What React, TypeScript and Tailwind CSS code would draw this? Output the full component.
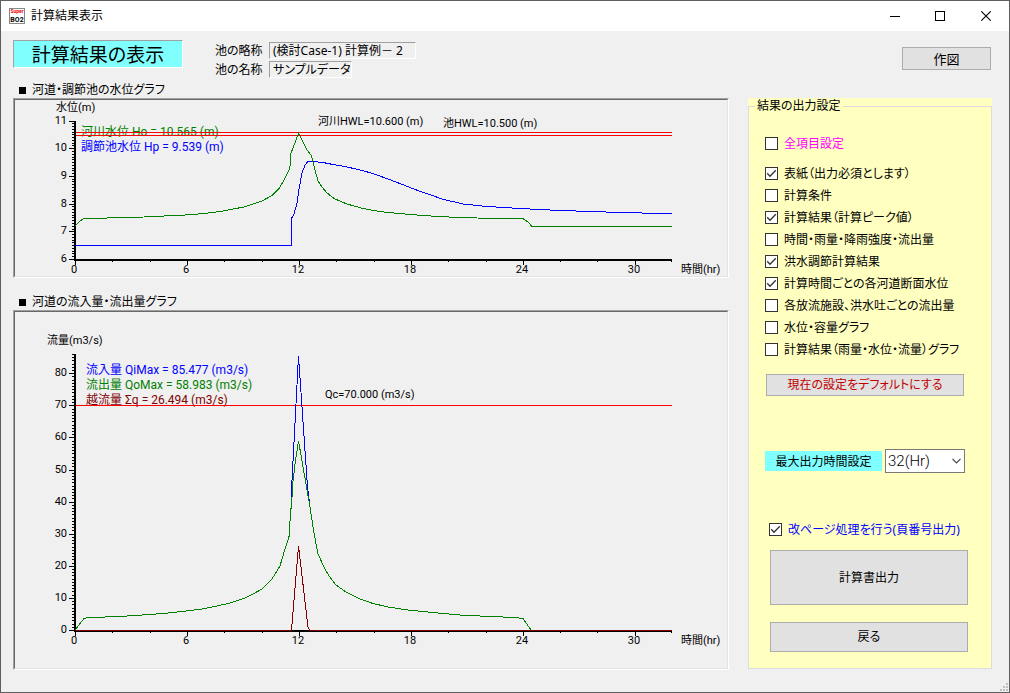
import { useState } from 'react';
import type { ReactNode } from 'react';

type Point = [number, number];

const toPoints = (pts: Point[]) => pts.map((p) => p.join(',')).join(' ');

const HOUR = 18.66;
const AXIS_X = 75;

const riverLevel: Point[] = [
  [75, 226], [79, 222], [83, 219], [84, 218.5], [106, 218.3], [109, 217.6], [144, 217], [164, 216], [181, 215.3],
  [195, 214.3], [206, 213.3], [223, 211], [233, 209], [244, 207], [253, 204], [262, 201], [272, 195.5], [279, 188.5],
  [283, 182], [289, 170], [290, 166], [291, 153], [293, 148], [298.5, 133.5], [304, 144], [307, 150], [311, 155],
  [312.5, 160], [315, 170], [318, 181], [322, 187], [327, 193], [335, 199], [347, 204], [360, 207.7], [373, 210.5],
  [388, 212.5], [408, 214.3], [423, 215.5], [438, 216.5], [459, 217.5], [495, 218.5], [523, 218.7], [528, 222],
  [532, 226.5], [672, 226.5],
];

const pondLevel: Point[] = [
  [75, 245.5], [291.5, 245.5], [291.5, 218.5], [294, 214], [297, 203], [299, 189], [302, 173], [305, 165],
  [308, 161.5], [313, 161.5], [323, 162.5], [333, 164.5], [345, 166.5], [360, 170], [373, 173.5], [388, 179],
  [405, 185.5], [415, 189.5], [428, 194], [442, 199], [463, 204], [485, 206.3], [517, 208.3], [535, 209.3],
  [557, 210.3], [584, 211.3], [615, 212.3], [654, 213.3], [672, 213.5],
];

const outflow: Point[] = [
  [75, 630], [84, 618.5], [88, 617.5], [109, 616.9], [127, 616], [150, 614.5], [168, 613], [186, 611], [202, 609],
  [215, 606.5], [230, 603], [244, 598.5], [253, 594], [262, 589], [272, 579], [280, 566], [285, 549], [289.5, 535],
  [290.5, 508], [291.5, 508], [292.5, 486], [295, 464], [298.5, 441], [301, 455], [307, 490], [310, 507], [314, 533],
  [318, 554], [324, 567], [329, 576], [336, 585], [346, 592], [360, 599], [373, 603.5], [388, 607], [408, 610],
  [423, 611.5], [438, 613], [460, 615], [490, 616.5], [515, 617.5], [523, 618.5], [531, 630],
];

const inflow: Point[] = [[291, 508], [291.5, 490], [298.5, 356], [307.5, 487], [309.5, 503]];

const overflow: Point[] = [[75, 630.5], [291.5, 630.5], [298.5, 546], [308, 627], [309.5, 630.5], [672, 630.5]];

function Axes({ base, top, unit, minor, labels }: {
  base: number;
  top: number;
  unit: number;
  minor: number;
  labels: { value: number; offset: number }[];
}) {
  const minorTicks: number[] = [];
  for (let i = 0; base - i * minor >= top - 0.5; i++) minorTicks.push(base - i * minor);
  return (
    <g>
      <g fill="#000" shapeRendering="crispEdges">
        <rect x="74" y={top} width="2" height={base - top + 2} />
        <rect x="74" y={base} width="598" height="2" />
        {minorTicks.map((y) => (
          <rect key={y} x="72" y={Math.round(y)} width="2" height="1" />
        ))}
        {labels.map((l) => (
          <rect key={l.value} x="69" y={Math.round(base - l.offset * unit)} width="5" height="1" />
        ))}
        {Array.from({ length: 17 }, (_, i) => (
          <rect
            key={i}
            x={Math.min(671, Math.round(AXIS_X + i * 2 * HOUR))}
            y={base + 2}
            width="1"
            height={i % 3 === 0 ? 4 : 1}
          />
        ))}
      </g>
      <g fontSize="11">
        {labels.map((l) => (
          <text key={l.value} x="67" y={Math.round(base - l.offset * unit) + 3} textAnchor="end">
            {l.value}
          </text>
        ))}
        {[0, 6, 12, 18, 24, 30].map((h) => (
          <text key={h} x={AXIS_X - 1 + Math.round(h * HOUR)} y={base + 14} textAnchor="middle">
            {h}
          </text>
        ))}
        <text x="681" y={base + 14}>時間(hr)</text>
      </g>
    </g>
  );
}

function Line({ pts, color }: { pts: Point[]; color: string }) {
  return <polyline points={toPoints(pts)} fill="none" stroke={color} strokeWidth="1" shapeRendering="crispEdges" />;
}

const chartClass = "block h-auto w-full font-[Roboto,'Noto_Sans_CJK_JP',sans-serif]";

function LevelChart() {
  return (
    <svg viewBox="15 100 712 176" className={chartClass} role="img" aria-label="水位グラフ">
      <Axes
        base={259}
        top={121}
        unit={27.7}
        minor={2.77}
        labels={[6, 7, 8, 9, 10, 11].map((value) => ({ value, offset: value - 6 }))}
      />
      <text x="56" y="111" fontSize="11">水位(m)</text>
      <g fontSize="12">
        <text x="81" y="136" fill="#008000">河川水位 Ho = 10.565 (m)</text>
        <text x="81" y="151" fill="#0000ff">調節池水位 Hp = 9.539 (m)</text>
      </g>
      <g fontSize="11">
        <text x="318" y="125">河川HWL=10.600 (m)</text>
        <text x="443" y="127">池HWL=10.500 (m)</text>
      </g>
      <g fill="#ff0000" shapeRendering="crispEdges">
        <rect x="76" y="132" width="596" height="1" />
        <rect x="76" y="135" width="596" height="1" />
      </g>
      <Line pts={pondLevel} color="#0000ff" />
      <Line pts={riverLevel} color="#008000" />
    </svg>
  );
}

function FlowChart() {
  return (
    <svg viewBox="15 312 712 356" className={chartClass} role="img" aria-label="流量グラフ">
      <Axes
        base={630}
        top={354}
        unit={3.21}
        minor={3.21}
        labels={[0, 10, 20, 30, 40, 50, 60, 70, 80].map((value) => ({ value, offset: value }))}
      />
      <text x="47" y="344" fontSize="11">流量(m3/s)</text>
      <g fontSize="12">
        <text x="86" y="374" fill="#0000ff">流入量 QiMax = 85.477 (m3/s)</text>
        <text x="86" y="389" fill="#008000">流出量 QoMax = 58.983 (m3/s)</text>
        <text x="86" y="404" fill="#800000">越流量 Σq = 26.494 (m3/s)</text>
      </g>
      <text x="325" y="398" fontSize="11">Qc=70.000 (m3/s)</text>
      <rect x="76" y="405" width="596" height="1" fill="#ff0000" shapeRendering="crispEdges" />
      <Line pts={inflow} color="#0000ff" />
      <Line pts={outflow} color="#008000" />
      <Line pts={overflow} color="#800000" />
    </svg>
  );
}

function ChartSection({ title, className, children }: { title: string; className: string; children: ReactNode }) {
  return (
    <section className={className}>
      <h2 className="flex h-[18px] items-center gap-1.5 pl-1 text-xs leading-4">
        <span className="mt-0.5 ml-0.5 size-[7px] bg-black" />
        <span className="pt-0.5">{title}</span>
      </h2>
      <div className="border border-t-[#a0a0a0] border-r-white border-b-white border-l-[#a0a0a0]">
        <div className="border border-t-[#696969] border-r-[#e3e3e3] border-b-[#e3e3e3] border-l-[#696969]">
          {children}
        </div>
      </div>
    </section>
  );
}

function Check({ label, initial = false, color = 'text-black', className = '' }: {
  label: string;
  initial?: boolean;
  color?: string;
  className?: string;
}) {
  const [on, setOn] = useState(initial);
  return (
    <label className={`flex h-[22px] items-center gap-1.5 text-xs leading-4 whitespace-nowrap ${color} ${className}`}>
      <span className="grid shrink-0">
        <input
          type="checkbox"
          checked={on}
          onChange={(e) => setOn(e.target.checked)}
          className="peer col-start-1 row-start-1 size-[13px] appearance-none border border-[#333] bg-white"
        />
        <svg
          viewBox="0 0 13 13"
          className="pointer-events-none col-start-1 row-start-1 size-[13px] opacity-0 peer-checked:opacity-100"
          fill="none"
          stroke="#333"
          strokeWidth="1.3"
        >
          <path d="M2.2 6.3 L5 9.2 L10.8 3.3" />
        </svg>
      </span>
      <span className="pt-0.5">{label}</span>
    </label>
  );
}

const outputItems = [
  { label: '表紙（出力必須とします）', initial: true },
  { label: '計算条件' },
  { label: '計算結果（計算ピーク値）', initial: true },
  { label: '時間・雨量・降雨強度・流出量' },
  { label: '洪水調節計算結果', initial: true },
  { label: '計算時間ごとの各河道断面水位', initial: true },
  { label: '各放流施設、洪水吐ごとの流出量' },
  { label: '水位・容量グラフ' },
  { label: '計算結果（雨量・水位・流量）グラフ' },
];

const buttonBase = 'block border border-[#adadad] bg-[#e1e1e1] leading-4';
const sunken = 'border border-t-[#a0a0a0] border-r-white border-b-white border-l-[#a0a0a0]';

function TitleBar() {
  return (
    <header className="flex h-[30px] items-center bg-white pl-2">
      <svg viewBox="0 0 16 16" className="size-4 shrink-0 font-[Roboto,sans-serif]" aria-hidden="true">
        <rect x="0.5" y="0.5" width="15" height="15" fill="#fff" stroke="#888" />
        <text x="8" y="5" fontSize="5" fontWeight="700" fill="#f00000" textAnchor="middle">Super</text>
        <text x="8" y="14" fontSize="7" fontWeight="700" fill="#000" textAnchor="middle">BO2</text>
      </svg>
      <h1 className="ml-1.5 flex-1 text-xs leading-4">計算結果表示</h1>
      <button type="button" aria-label="最小化" className="flex h-full w-[45px] items-center justify-center">
        <svg viewBox="0 0 10 10" className="size-2.5" shapeRendering="crispEdges">
          <rect y="5" width="10" height="1" />
        </svg>
      </button>
      <button type="button" aria-label="最大化" className="flex h-full w-[45px] items-center justify-center">
        <svg viewBox="0 0 10 10" className="size-2.5" fill="none" stroke="#000">
          <rect x="0.5" y="0.5" width="9" height="9" />
        </svg>
      </button>
      <button type="button" aria-label="閉じる" className="flex h-full w-[47px] items-center justify-center">
        <svg viewBox="0 0 10 10" className="size-2.5" fill="none" stroke="#000" strokeWidth="1.1">
          <path d="M0.3 0.3 L9.7 9.7 M9.7 0.3 L0.3 9.7" />
        </svg>
      </button>
    </header>
  );
}

export default function App() {
  return (
    <div className="relative flex min-h-screen flex-col border border-[#5f5f5f] bg-[#f0f0f0] font-['Noto_Sans','Noto_Sans_CJK_JP',sans-serif] text-black [font-feature-settings:'palt']">
      <TitleBar />
      <div className="flex h-[49px] items-start pr-[18px] pl-3">
        <div className={`mt-[9px] flex h-7 w-[170px] items-center justify-center bg-[#80ffff] pt-0.5 text-[19px] leading-6 ${sunken}`}>
          計算結果の表示
        </div>
        <dl className="mt-[11px] ml-8 grid grid-cols-[54px_auto] gap-y-0.5 text-xs leading-[17px]">
          <dt>池の略称</dt>
          <dd className={`flex h-[17px] w-[147px] items-center pl-[3px] whitespace-nowrap ${sunken}`}>(検討Case-1) 計算例－ 2</dd>
          <dt>池の名称</dt>
          <dd className={`flex h-[17px] w-fit items-center pr-px pl-[3px] whitespace-nowrap ${sunken}`}>サンプルデータ</dd>
        </dl>
        <button type="button" className={`${buttonBase} mt-4 ml-auto h-[23px] w-[89px] text-[13px]`}>作図</button>
      </div>
      <main className="flex flex-1 gap-[19px] pr-[17px] pb-[22px] pl-3">
        <div className="min-w-0 flex-1">
          <ChartSection title="河道・調節池の水位グラフ" className="">
            <LevelChart />
          </ChartSection>
          <ChartSection title="河道の流入量・流出量グラフ" className="mt-[14px]">
            <FlowChart />
          </ChartSection>
        </div>
        <aside className="mt-[18px] w-[244px] shrink-0 self-start bg-[#ffffc0]">
          <fieldset className="border border-[#dcdcdc] px-4 pb-4">
            <legend className="-ml-2.5 px-0.5 text-xs leading-4">結果の出力設定</legend>
            <Check label="全項目設定" color="text-[#ff00ff]" className="mt-[18px] mb-2" />
            {outputItems.map((item) => (
              <Check key={item.label} label={item.label} initial={item.initial} />
            ))}
            <button type="button" className={`${buttonBase} mt-3.5 ml-px h-[22px] w-[198px] text-xs text-[#c00000]`}>
              現在の設定をデフォルトにする
            </button>
            <div className="mt-[53px] flex items-center gap-[3px]">
              <label htmlFor="max-hours" className="flex h-5 w-[117px] items-center justify-center bg-[#80ffff] pt-0.5 text-xs leading-4">
                最大出力時間設定
              </label>
              <div className="grid w-20">
                <select
                  id="max-hours"
                  defaultValue="32"
                  className="col-start-1 row-start-1 h-6 appearance-none border border-[#7a7a7a] bg-white pl-0.5 font-[Roboto,sans-serif] text-[15px] leading-5 font-light"
                >
                  <option value="24">24(Hr)</option>
                  <option value="32">32(Hr)</option>
                  <option value="48">48(Hr)</option>
                </select>
                <svg
                  viewBox="0 0 9 6"
                  className="pointer-events-none col-start-1 row-start-1 mr-1 h-1.5 w-[9px] self-center justify-self-end"
                  fill="none"
                  stroke="#444"
                  strokeWidth="1.2"
                >
                  <path d="M0.5 0.8 L4.5 4.8 L8.5 0.8" />
                </svg>
              </div>
            </div>
            <Check label="改ページ処理を行う(頁番号出力)" initial color="text-[#0000ff]" className="mt-[45px] ml-1" />
            <button type="button" className={`${buttonBase} mt-[10px] ml-[5px] h-[55px] w-[198px] text-xs`}>計算書出力</button>
            <button type="button" className={`${buttonBase} mt-[17px] ml-[5px] h-[30px] w-[198px] text-xs`}>戻る</button>
          </fieldset>
        </aside>
      </main>
      <svg
        viewBox="0 0 8 8"
        className="absolute right-px bottom-px size-2"
        fill="#bfbfbf"
        shapeRendering="crispEdges"
        aria-hidden="true"
      >
        <path d="M6 0h2v2h-2z M3 3h2v2h-2z M6 3h2v2h-2z M0 6h2v2h-2z M3 6h2v2h-2z M6 6h2v2h-2z" />
      </svg>
    </div>
  );
}
